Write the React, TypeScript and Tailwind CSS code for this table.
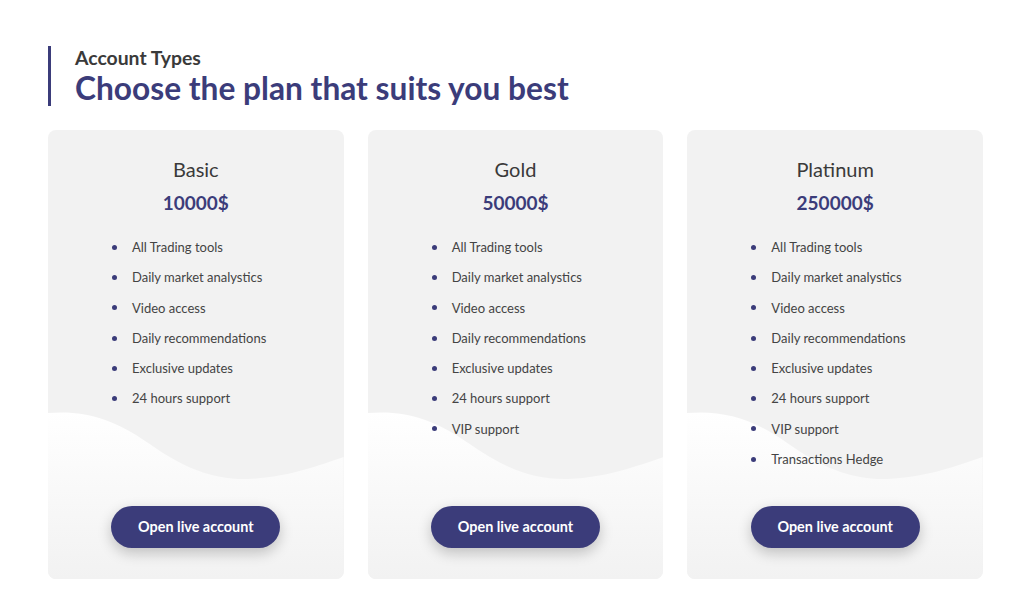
import React from "react";

const plans = [
  {
    name: "Basic",
    price: "10000$",
    features: [
      "All Trading tools",
      "Daily market analystics",
      "Video access",
      "Daily recommendations",
      "Exclusive updates",
      "24 hours support",
    ],
  },
  {
    name: "Gold",
    price: "50000$",
    features: [
      "All Trading tools",
      "Daily market analystics",
      "Video access",
      "Daily recommendations",
      "Exclusive updates",
      "24 hours support",
      "VIP support",
    ],
  },
  {
    name: "Platinum",
    price: "250000$",
    features: [
      "All Trading tools",
      "Daily market analystics",
      "Video access",
      "Daily recommendations",
      "Exclusive updates",
      "24 hours support",
      "VIP support",
      "Transactions Hedge",
    ],
  },
];

const Wave = () => (
  <svg
    className="absolute inset-0 h-full w-full"
    viewBox="0 0 295 449"
    preserveAspectRatio="none"
  >
    <defs>
      <linearGradient id="waveFill" x1="0" y1="0" x2="0" y2="1">
        <stop offset="0" stopColor="#ffffff" />
        <stop offset="1" stopColor="#f2f2f2" />
      </linearGradient>
    </defs>
    <path
      d="M0,283 C35,280 65,288 100,313 C135,338 165,350 200,349 C240,347 268,336 295,327 L295,449 L0,449 Z"
      fill="url(#waveFill)"
    />
  </svg>
);

const PlanCard = ({ plan }: { plan: { name: string; price: string; features: string[] } }) => {
  return (
    <div className="relative flex h-[449px] flex-col overflow-hidden rounded-lg bg-[#f2f2f2]">
      <Wave />
      <div className="relative flex h-full flex-col pt-[25px] pb-[31px]">
        <h3 className="text-center text-[20px] leading-[28px] text-[#3a3a3a]">{plan.name}</h3>
        <p className="mt-[6px] text-center text-[19px] font-bold leading-[28px] text-[#3b3c7a]">
          {plan.price}
        </p>
        <ul className="mt-[15px] pl-[64px]">
          {plan.features.map((f) => (
            <li key={f} className="flex items-center text-[13px] leading-[30.3px] text-[#444]">
              <span className="mr-[15px] h-[5px] w-[5px] rounded-full bg-[#3b3c7a]" />
              {f}
            </li>
          ))}
        </ul>
        <button className="mx-auto mt-auto h-[42px] w-[169px] rounded-full bg-[#3b3c7a] text-[14.4px] font-bold text-white shadow-[0_5px_14px_rgba(0,0,0,0.22)]">
          Open live account
        </button>
      </div>
    </div>
  );
};

export default function App() {
  return (
    <div className="min-h-[598px] bg-white font-['Lato','Liberation_Sans',sans-serif]">
      <div className="ml-[48px] w-[935px] pt-[46px]">
        <div className="border-l-[3px] border-[#3b3c7a] pl-[24px]">
          <p className="text-[19.4px] font-bold leading-[24px] text-[#3a3a3a]">Account Types</p>
          <h1 className="text-[31.7px] font-bold leading-[36px] text-[#3b3c7a]">
            Choose the plan that suits you best
          </h1>
        </div>
        <div className="mt-[24px] grid grid-cols-3 gap-[24px]">
          {plans.map((p) => (
            <PlanCard key={p.name} plan={p} />
          ))}
        </div>
      </div>
    </div>
  );
}
